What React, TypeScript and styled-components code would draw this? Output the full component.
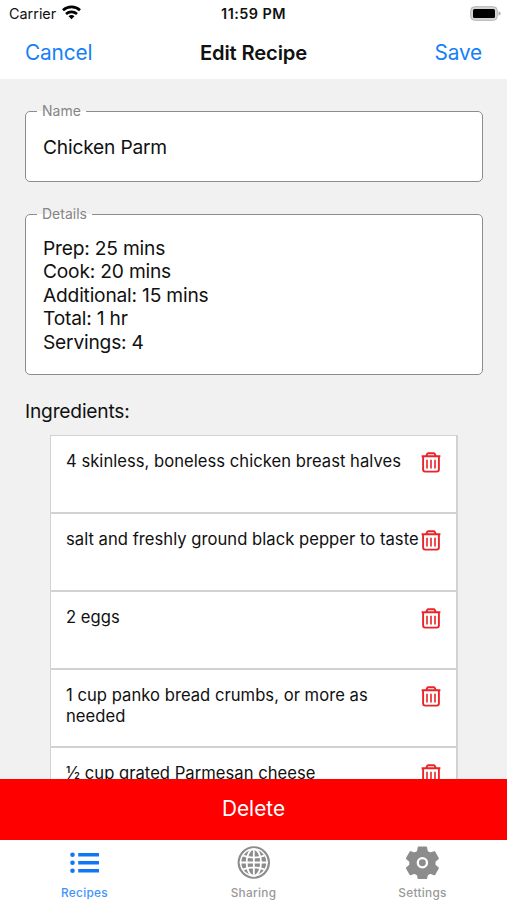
import React from "react";
import styled, { createGlobalStyle } from "styled-components";

const GlobalStyle = createGlobalStyle`
  * { box-sizing: border-box; }
  body { margin: 0; background: #f1f1f1; }
`;

const Screen = styled.div`
  width: 507px;
  height: 900px;
  display: flex;
  flex-direction: column;
  overflow: hidden;
  background: #f1f1f1;
  color: #111;
  font-family: Inter, "Noto Sans", sans-serif;
`;

const Header = styled.header`
  flex: none;
  height: 79px;
  background: #fff;
`;

const StatusBar = styled.div`
  height: 27px;
  display: grid;
  grid-template-columns: 1fr auto 1fr;
  align-items: center;
  padding: 0 6px 0 9px;
`;

const Carrier = styled.div`
  display: flex;
  align-items: center;
  gap: 6px;
  font-size: 14.4px;
  line-height: 27px;
  svg { margin-top: -2px; }
`;

const Clock = styled.div`
  margin-left: -3px;
  font-size: 14.4px;
  font-weight: 600;
  line-height: 27px;
  letter-spacing: 0.45px;
`;

const BatterySlot = styled.div`
  display: flex;
  justify-content: flex-end;
`;

const NavBar = styled.div`
  height: 52px;
  display: grid;
  grid-template-columns: 1fr auto 1fr;
  align-items: center;
  padding: 0 25px;
`;

const NavButton = styled.button<{ $end?: boolean }>`
  justify-self: ${(p) => (p.$end ? "end" : "start")};
  border: 0;
  padding: 0;
  background: none;
  color: #1580f8;
  font: 400 20.8px/50px Inter, sans-serif;
  letter-spacing: -0.15px;
`;

const Title = styled.h1`
  margin: 0;
  font-size: 20.2px;
  font-weight: 600;
  line-height: 50px;
  letter-spacing: -0.15px;
`;

const Content = styled.main`
  flex: 1;
  min-height: 0;
  overflow: hidden;
  padding: 24px 24px 0 25px;
`;

const Field = styled.fieldset<{ $height: number; $top: number }>`
  height: ${(p) => p.$height}px;
  min-width: 0;
  margin: 0 0 24px;
  padding: ${(p) => p.$top}px 17px 0;
  border: 1px solid #8c8c8c;
  border-radius: 5px;
  background: #fff;
`;

const Legend = styled.legend`
  margin-left: -6px;
  padding: 0 5px;
  color: #858585;
  font-size: 14px;
  line-height: 16px;
`;

const FieldText = styled.div`
  font-size: 19.2px;
  line-height: 23.4px;
  letter-spacing: -0.2px;
  white-space: pre-line;
`;

const SectionLabel = styled.h2`
  margin: 0 0 12px;
  font-size: 19.2px;
  font-weight: 400;
  line-height: 24px;
  letter-spacing: -0.2px;
`;

const List = styled.ul`
  list-style: none;
  width: 408px;
  margin: 0 0 0 25px;
  padding: 0;
  border: solid #d2d2d2;
  border-width: 1px 2px 1px 1px;
`;

const Item = styled.li`
  height: 78.1px;
  display: flex;
  align-items: flex-start;
  padding: 15px 15px 0;
  border-bottom: 2px solid #d2d2d2;
  background: #fff;
  svg { flex: none; margin-top: 1px; }
`;

const ItemText = styled.span`
  flex: 0 0 355px;
  font-size: 16.6px;
  line-height: 21px;
  letter-spacing: 0.03px;
`;

const DeleteButton = styled.button`
  flex: none;
  height: 61px;
  border: 0;
  padding: 0 0 2px;
  background: #f00;
  color: #fff;
  font: 400 20.8px/58px Inter, sans-serif;
`;

const TabBar = styled.nav`
  flex: none;
  height: 60px;
  display: grid;
  grid-template-columns: repeat(3, 1fr);
  background: #fff;
`;

const Tab = styled.div<{ $active?: boolean }>`
  display: flex;
  flex-direction: column;
  align-items: center;
  padding-top: 5px;
  color: ${(p) => (p.$active ? "#1178f5" : "#8c8c8c")};
`;

const TabLabel = styled.span<{ $active?: boolean }>`
  margin-top: 6px;
  color: ${(p) => (p.$active ? "#3f94fa" : "#999")};
  font-size: 11.8px;
  font-weight: 500;
  line-height: 16px;
  letter-spacing: 0.3px;
`;

const WifiIcon = () => (
  <svg width="19" height="15" viewBox="0 0 19 15" fill="none" stroke="#000" strokeWidth="2.7">
    <path d="M1 5.2C5.8.8 13.2.8 18 5.2" />
    <path d="M4 8.9c3.1-2.8 7.9-2.8 11 0" />
    <path d="M6.5 11.2c1.7-1.5 4.3-1.5 6 0l-3 3.1z" fill="#000" stroke="none" />
  </svg>
);

const BatteryIcon = () => (
  <svg width="31" height="15" viewBox="0 0 31 15">
    <rect x=".7" y=".7" width="26.6" height="13.6" rx="4" fill="#d4d4d4" stroke="#b5b5b5" />
    <rect x="3" y="3" width="22" height="9" rx="1.5" />
    <path d="M28.5 5.2q2.2.8 2.2 2.3t-2.2 2.3z" fill="#aaa" />
  </svg>
);

const TrashIcon = () => (
  <svg width="20" height="21" viewBox="0 0 20 21" fill="none" stroke="#ea2428" strokeWidth="1.9">
    <path d="M.6 4.3h18.8M5.2 4.2l.9-2.1q.4-.9 1.4-.9h5q1 0 1.4.9l.9 2.1M2.1 4.3v13.2q0 2.1 2.1 2.1h11.6q2.1 0 2.1-2.1V4.3" />
    <path d="M6 7.7v8.8M10 7.7v8.8M14 7.7v8.8" strokeWidth="1.6" />
  </svg>
);

const ListIcon = () => (
  <svg width="34" height="34" viewBox="0 0 34 34" fill="currentColor">
    <circle cx="4.5" cy="9.7" r="2.3" />
    <circle cx="4.5" cy="17.7" r="2.3" />
    <circle cx="4.5" cy="25.7" r="2.3" />
    <path d="M10.2 8h20.8v3.6H10.2zM10.2 16h20.8v3.6H10.2zM10.2 24h20.8v3.6H10.2z" />
  </svg>
);

const GlobeIcon = () => (
  <svg width="34" height="34" viewBox="0 0 34 34" fill="none" stroke="#fff" strokeWidth="1.8">
    <circle cx="16.8" cy="17.5" r="16.2" fill="currentColor" stroke="none" />
    <ellipse cx="16.8" cy="17.5" rx="13.2" ry="13.4" strokeWidth="1.5" />
    <ellipse cx="16.8" cy="17.5" rx="7.2" ry="13.4" />
    <path d="M16.8 4.1v26.8M2.6 17.5h28.4M6.2 10.6q10.6 4 21.2 0M6.2 24.4q10.6-4 21.2 0" />
  </svg>
);

const GearIcon = () => (
  <svg width="34" height="34" viewBox="0 0 34 34">
    <path
      fill="currentColor"
      stroke="currentColor"
      strokeWidth="1.6"
      strokeLinejoin="round"
      d="M12.6 2.2h7.6l.9 4.4 3 1.7 4.3-1.4 3.7 6.5-3.4 3v3.6l3.4 3-3.7 6.5-4.3-1.4-3 1.7-.9 4.2h-7.6l-.9-4.2-3-1.7-4.3 1.4L.7 23l3.4-3v-3.6l-3.4-3 3.7-6.5 4.3 1.4 3-1.7z"
    />
    <circle cx="16.4" cy="17.8" r="4.6" fill="none" stroke="#fff" strokeWidth="2.3" />
  </svg>
);

const ingredients = [
  "4 skinless, boneless chicken breast halves",
  "salt and freshly ground black pepper to taste",
  "2 eggs",
  "1 cup panko bread crumbs, or more as needed",
  "½ cup grated Parmesan cheese",
];

const details = "Prep: 25 mins\nCook: 20 mins\nAdditional: 15 mins\nTotal: 1 hr\nServings: 4";

const tabs = [
  { label: "Recipes", Icon: ListIcon, active: true },
  { label: "Sharing", Icon: GlobeIcon, active: false },
  { label: "Settings", Icon: GearIcon, active: false },
];

export default function App() {
  return (
    <Screen>
      <GlobalStyle />
      <Header>
        <StatusBar>
          <Carrier>
            <span>Carrier</span>
            <WifiIcon />
          </Carrier>
          <Clock>11:59 PM</Clock>
          <BatterySlot>
            <BatteryIcon />
          </BatterySlot>
        </StatusBar>
        <NavBar>
          <NavButton>Cancel</NavButton>
          <Title>Edit Recipe</Title>
          <NavButton $end>Save</NavButton>
        </NavBar>
      </Header>
      <Content>
        <Field $height={79} $top={17}>
          <Legend>Name</Legend>
          <FieldText>Chicken Parm</FieldText>
        </Field>
        <Field $height={169} $top={15}>
          <Legend>Details</Legend>
          <FieldText>{details}</FieldText>
        </Field>
        <SectionLabel>Ingredients:</SectionLabel>
        <List>
          {ingredients.map((text) => (
            <Item key={text}>
              <ItemText>{text}</ItemText>
              <TrashIcon />
            </Item>
          ))}
        </List>
      </Content>
      <DeleteButton>Delete</DeleteButton>
      <TabBar>
        {tabs.map(({ label, Icon, active }) => (
          <Tab key={label} $active={active}>
            <Icon />
            <TabLabel $active={active}>{label}</TabLabel>
          </Tab>
        ))}
      </TabBar>
    </Screen>
  );
}
